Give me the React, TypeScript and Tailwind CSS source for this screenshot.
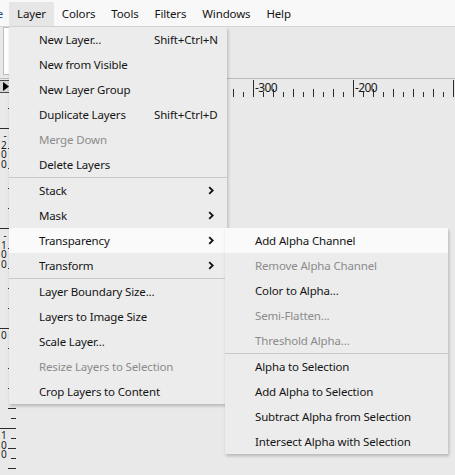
import clsx from "clsx";

type Item = {
  label?: string;
  shortcut?: string;
  sub?: boolean;
  disabled?: boolean;
  active?: boolean;
  sep?: boolean;
};

const layerItems: Item[] = [
  { label: "New Layer...", shortcut: "Shift+Ctrl+N" },
  { label: "New from Visible" },
  { label: "New Layer Group" },
  { label: "Duplicate Layers", shortcut: "Shift+Ctrl+D" },
  { label: "Merge Down", disabled: true },
  { label: "Delete Layers" },
  { sep: true },
  { label: "Stack", sub: true },
  { label: "Mask", sub: true },
  { label: "Transparency", sub: true, active: true },
  { label: "Transform", sub: true },
  { sep: true },
  { label: "Layer Boundary Size..." },
  { label: "Layers to Image Size" },
  { label: "Scale Layer..." },
  { label: "Resize Layers to Selection", disabled: true },
  { label: "Crop Layers to Content" },
];

const transparencyItems: Item[] = [
  { label: "Add Alpha Channel", active: true },
  { label: "Remove Alpha Channel", disabled: true },
  { label: "Color to Alpha..." },
  { label: "Semi-Flatten...", disabled: true },
  { label: "Threshold Alpha...", disabled: true },
  { sep: true },
  { label: "Alpha to Selection" },
  { label: "Add Alpha to Selection" },
  { label: "Subtract Alpha from Selection" },
  { label: "Intersect Alpha with Selection" },
];

const menubar = ["Layer", "Colors", "Tools", "Filters", "Windows", "Help"];

function Chevron() {
  return (
    <svg width="6" height="9" viewBox="0 0 6 9" className="ml-auto shrink-0">
      <path d="M1.2 1.1 L4.7 4.5 L1.2 7.9" fill="none" stroke="#111" strokeWidth="1.8" />
    </svg>
  );
}

function MenuRow({ item }: { item: Item }) {
  if (item.sep) return <div className="h-px bg-[#c8c8c8]" />;
  return (
    <div
      className={clsx(
        "flex h-[25px] items-center pl-[30px] pr-[13px]",
        item.active && "bg-[#fafafa]",
        item.disabled ? "text-[#8b8b8b]" : "text-[#141414]"
      )}
    >
      <span className="w-[115px] shrink-0 whitespace-nowrap">{item.label}</span>
      {item.shortcut && <span className="whitespace-nowrap">{item.shortcut}</span>}
      {item.sub && <Chevron />}
    </div>
  );
}

// horizontal ruler, page x offset of the svg
const HX = 11;
const hTicks = Array.from({ length: 26 }, (_, i) => 203 + i * 10);
const vTicks = Array.from({ length: 38 }, (_, i) => 98 + i * 10);
const vLabels: [number, string][] = [
  [128, "-200"],
  [228, "-100"],
  [328, "0"],
  [428, "100"],
];

function HRuler() {
  return (
    <svg width={455 - HX} height={18} className="block shrink-0">
      {hTicks.map((x) => {
        const step = Math.round((x - 253) / 10);
        const major = ((step % 10) + 10) % 10 === 0;
        const y1 = major ? 1 : step % 2 === 0 ? 10 : 13;
        return <line key={x} x1={x - HX + 0.5} x2={x - HX + 0.5} y1={y1} y2={18} stroke="#2b2b2b" strokeWidth="1" />;
      })}
      {[
        [153, "-400"],
        [253, "-300"],
        [353, "-200"],
      ].map(([x, t]) => (
        <text key={t} x={(x as number) - HX + 2} y={13} fontSize="12" letterSpacing="-0.6" fill="#1a1a1a" fontFamily="'Noto Sans', sans-serif">
          {t}
        </text>
      ))}
    </svg>
  );
}

function VRuler() {
  const top = 97;
  return (
    <svg width={17} height={378} className="block shrink-0">
      {vTicks.map((y) => {
        const step = Math.round((y - 128) / 10);
        const major = ((step % 10) + 10) % 10 === 0;
        const x1 = major ? 0 : step % 2 === 0 ? 8 : 11;
        return <line key={y} x1={x1} x2={16} y1={y - top + 0.5} y2={y - top + 0.5} stroke="#2b2b2b" strokeWidth="1" />;
      })}
      {vLabels.map(([m, t]) => (
        <text key={m} fontSize="10" textAnchor="end" fill="#1a1a1a" fontFamily="'Noto Sans', sans-serif">
          {t.split("").map((c, k) => (
            <tspan key={k} x={6.5} y={m - top + 3 + 9.5 * k + 8}>
              {c}
            </tspan>
          ))}
        </text>
      ))}
    </svg>
  );
}

export default function App() {
  return (
    <div
      className="relative h-[475px] w-[455px] overflow-hidden bg-[#e9e9e9] text-[11.5px] tracking-[-0.15px] text-[#141414]"
      style={{ fontFamily: "'Noto Sans', 'Open Sans', sans-serif" }}
    >
      {/* menubar */}
      <div className="flex h-[27px] border-b border-[#d4d4d4] bg-[#f8f8f8] pt-[2px]">
        <div className="flex h-[24px] w-[9px] shrink-0 items-center justify-end overflow-hidden">
          <span className="whitespace-nowrap pr-[6px] text-[#1f4c96]">Image</span>
        </div>
        {menubar.map((m) => (
          <div key={m} className={clsx("flex h-[24px] items-center px-[8px]", m === "Layer" && "bg-[#e6e6e6]")}>
            {m}
          </div>
        ))}
      </div>

      {/* toolbar strip behind the menu */}
      <div className="flex h-[51px]">
        <div className="ml-[3px] h-[48px] w-[30px] border border-[#bdbdbd] bg-white" />
      </div>

      {/* horizontal ruler */}
      <div className="flex h-[19px] border-t border-[#bdbdbd]">
        <div className="flex w-[11px] shrink-0 items-start">
          <div className="-ml-[4px] mt-[1px] flex h-[13px] w-[14px] items-center border border-[#4a4a4a] bg-[#d6d6d6] pl-[6px]">
            <svg width="6" height="9" viewBox="0 0 6 9">
              <path d="M0 0 L6 4.5 L0 9 Z" fill="#000" />
            </svg>
          </div>
        </div>
        <HRuler />
      </div>

      {/* vertical ruler + canvas */}
      <div className="flex">
        <VRuler />
        <div className="flex-1" />
      </div>

      {/* Layer menu */}
      <div className="absolute left-[9px] top-[27px] w-[218px] bg-[#ececec] shadow-[1px_2px_3px_rgba(0,0,0,0.22)]">
        {layerItems.map((it, i) => (
          <MenuRow key={i} item={it} />
        ))}
      </div>

      {/* Transparency submenu */}
      <div className="absolute left-[225px] top-[228px] w-[223px] bg-[#ececec] shadow-[1px_2px_3px_rgba(0,0,0,0.22)]">
        {transparencyItems.map((it, i) => (
          <MenuRow key={i} item={it} />
        ))}
      </div>
    </div>
  );
}
